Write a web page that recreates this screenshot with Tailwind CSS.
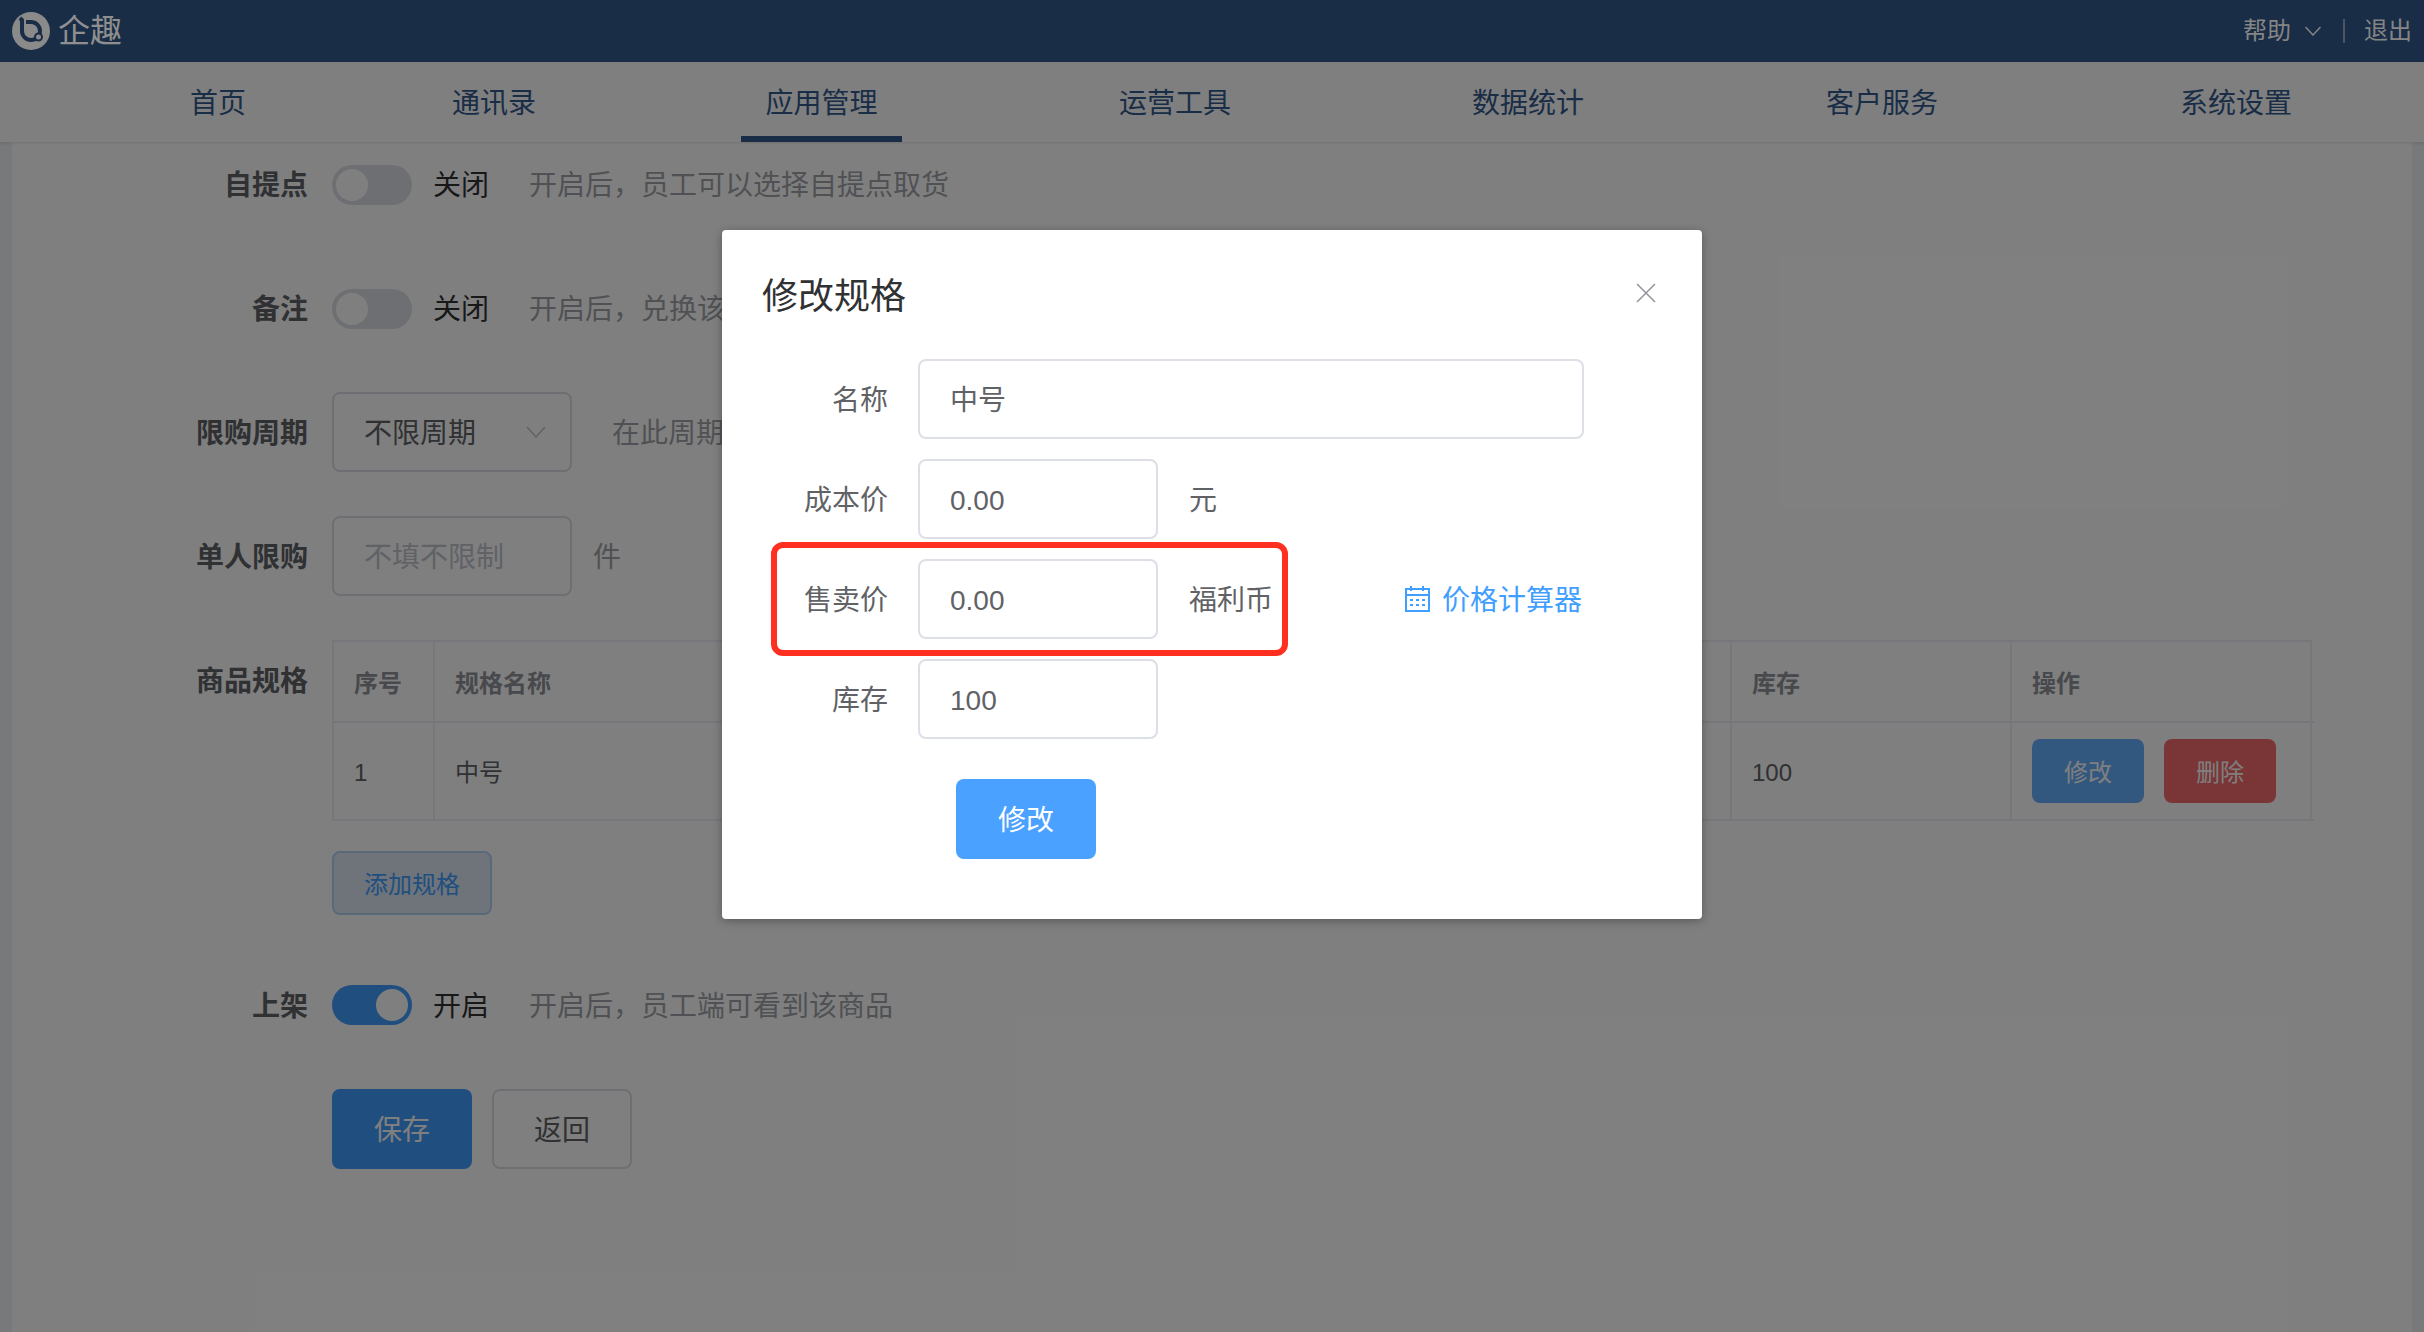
<!DOCTYPE html>
<html lang="zh-CN">
<head>
    <meta charset="UTF-8">
    <title>修改规格</title>
    <script src="https://cdn.jsdelivr.net/npm/@tailwindcss/browser@4"></script>
</head>
<body class="relative w-[2424px] h-[1332px] overflow-hidden bg-[#f0f2f5] font-['Liberation_Sans','Noto_Sans_CJK_SC',sans-serif] text-[28px] leading-10">
    <!-- header stays above the mask, its colours are the dimmed ones -->
    <header class="relative z-20 flex items-center h-[62px] pl-3 pr-3 bg-[#1a2d47]">
        <svg class="w-[38px] h-[38px]" viewBox="0 0 38 38">
            <circle cx="19" cy="19" r="19" fill="#8a8a8a"/>
            <path d="M8 6l2 2v11a9 9 0 1 0 9-9h-5" fill="none" stroke="#1a2d47" stroke-width="4"/>
            <circle cx="26.500" cy="25" r="3.500" fill="#8a8a8a" stroke="#1a2d47" stroke-width="2"/>
        </svg>
        <span class="ml-2 text-[32px] text-[#8f8f8f]">企趣</span>
        <span class="ml-auto text-2xl text-[#858585]">帮助</span>
        <svg class="ml-[14px] w-4 h-[10px]" viewBox="0 0 16 10"><path d="M0.500 1l7.500 8 7.500-8" fill="none" stroke="#858585" stroke-width="1.500"/></svg>
        <span class="ml-[22px] w-0.5 h-6 bg-[#4a5668]"></span>
        <span class="ml-[19px] text-2xl text-[#858585]">退出</span>
    </header>

    <nav class="relative z-10 flex h-20 pl-[166px] bg-white shadow-[0_1px_3px_rgba(0,0,0,0.12)] text-[#345a8e]">
        <a class="px-6 pt-[22px]">首页</a>
        <a class="ml-[158px] px-6 pt-[22px]">通讯录</a>
        <a class="ml-[181px] w-[161px] text-center pt-[22px] border-b-[6px] border-[#345a8e]">应用管理</a>
        <a class="ml-[193px] px-6 pt-[22px]">运营工具</a>
        <a class="ml-[193px] px-6 pt-[22px]">数据统计</a>
        <a class="ml-[194px] px-6 pt-[22px]">客户服务</a>
        <a class="ml-[194px] px-6 pt-[22px]">系统设置</a>
    </nav>

    <main class="mx-3 h-[1190px] pt-0.5 bg-white text-[#303133]">
        <div class="flex items-center h-20 mb-11">
            <label class="w-[296px] pt-1 text-right font-bold text-[#606266]">自提点</label>
            <span class="ml-6 mt-0.5 flex items-center w-20 h-10 pl-1 rounded-full bg-[#dcdfe6]"><i class="w-8 h-8 rounded-full bg-white"></i></span>
            <span class="ml-[21px] pt-1">关闭</span>
            <span class="ml-10 pt-1 text-[#a0a3a8]">开启后，员工可以选择自提点取货</span>
        </div>
        <div class="flex items-center h-20 mb-11">
            <label class="w-[296px] pt-1 text-right font-bold text-[#606266]">备注</label>
            <span class="ml-6 mt-0.5 flex items-center w-20 h-10 pl-1 rounded-full bg-[#dcdfe6]"><i class="w-8 h-8 rounded-full bg-white"></i></span>
            <span class="ml-[21px] pt-1">关闭</span>
            <span class="ml-10 pt-1 text-[#a0a3a8]">开启后，兑换该</span>
        </div>
        <div class="flex items-center h-20 mb-11">
            <label class="w-[296px] pt-1 text-right font-bold text-[#606266]">限购周期</label>
            <div class="ml-6 flex items-center justify-between w-60 h-20 pl-[30px] pr-6 border-2 border-[#dcdfe6] rounded-lg text-[#606266]">
                <span class="pt-1">不限周期</span>
                <svg class="w-5 h-3" viewBox="0 0 20 12"><path d="M1 1l9 10 9-10" fill="none" stroke="#c0c4cc" stroke-width="1.500"/></svg>
            </div>
            <span class="ml-10 pt-1 text-[#a0a3a8]">在此周期</span>
        </div>
        <div class="flex items-center h-20 mb-11">
            <label class="w-[296px] pt-1 text-right font-bold text-[#606266]">单人限购</label>
            <div class="ml-6 flex items-center w-60 h-20 pl-[30px] pt-1 border-2 border-[#dcdfe6] rounded-lg text-[#c0c4cc]">不填不限制</div>
            <span class="ml-[21px] pt-1 text-[#a0a3a8]">件</span>
        </div>

        <div class="flex">
            <label class="w-[296px] pt-[22px] text-right font-bold text-[#606266]">商品规格</label>
            <div class="ml-6 w-[1980px]">
                <div class="grid grid-cols-[101px_432px_432px_433px_280px_302px] border-2 border-b-0 border-[#ebeef5] text-2xl">
                    <div class="flex items-center h-[81px] pl-5 pt-1 border-b-2 border-r-2 border-[#ebeef5] font-bold text-[#909399]">序号</div>
                    <div class="flex items-center h-[81px] pl-5 pt-1 border-b-2 border-r-2 border-[#ebeef5] font-bold text-[#909399]">规格名称</div>
                    <div class="flex items-center h-[81px] pl-5 pt-1 border-b-2 border-r-2 border-[#ebeef5] font-bold text-[#909399]">成本价</div>
                    <div class="flex items-center h-[81px] pl-5 pt-1 border-b-2 border-r-2 border-[#ebeef5] font-bold text-[#909399]">售卖价</div>
                    <div class="flex items-center h-[81px] pl-5 pt-1 border-b-2 border-r-2 border-[#ebeef5] font-bold text-[#909399]">库存</div>
                    <div class="flex items-center h-[81px] pl-5 pt-1 border-b-2 border-[#ebeef5] font-bold text-[#909399]">操作</div>
                    <div class="flex items-center h-[98px] pl-5 pt-1 border-b-2 border-r-2 border-[#ebeef5] text-[#606266]">1</div>
                    <div class="flex items-center h-[98px] pl-5 pt-1 border-b-2 border-r-2 border-[#ebeef5] text-[#606266]">中号</div>
                    <div class="flex items-center h-[98px] pl-5 pt-1 border-b-2 border-r-2 border-[#ebeef5] text-[#606266]">0.00</div>
                    <div class="flex items-center h-[98px] pl-5 pt-1 border-b-2 border-r-2 border-[#ebeef5] text-[#606266]">0.00</div>
                    <div class="flex items-center h-[98px] pl-5 pt-1 border-b-2 border-r-2 border-[#ebeef5] text-[#606266]">100</div>
                    <div class="flex items-center gap-5 h-[98px] pl-5 border-b-2 border-[#ebeef5]">
                        <button class="w-28 h-16 pt-1 rounded-lg bg-[#66b1ff] text-white">修改</button>
                        <button class="w-28 h-16 pt-1 rounded-lg bg-[#f56c6c] text-white">删除</button>
                    </div>
                </div>
                <button class="mt-[30px] w-40 h-16 pt-1 rounded-lg border-2 border-[#b3d3f5] bg-[#dde8f5] text-2xl text-[#409eff]">添加规格</button>
            </div>
        </div>

        <div class="flex items-center h-20 mt-[50px] mb-11">
            <label class="w-[296px] pt-1 text-right font-bold text-[#606266]">上架</label>
            <span class="ml-6 flex items-center justify-end w-20 h-10 pr-1 rounded-full bg-[#409eff]"><i class="w-8 h-8 rounded-full bg-white"></i></span>
            <span class="ml-[21px] pt-1">开启</span>
            <span class="ml-10 pt-1 text-[#a0a3a8]">开启后，员工端可看到该商品</span>
        </div>
        <div class="flex gap-5 ml-80">
            <button class="w-[140px] h-20 pt-1 rounded-lg bg-[#409eff] text-white">保存</button>
            <button class="w-[140px] h-20 pt-1 rounded-lg border-2 border-[#dcdfe6] bg-white text-[#606266]">返回</button>
        </div>
    </main>

    <!-- mask and dialog -->
    <div class="absolute inset-0 z-10 bg-black/50">
        <div class="relative mt-[230px] mx-auto w-[980px] h-[689px] rounded bg-white shadow-[0_2px_10px_rgba(0,0,0,0.3)] text-[#606266]">
            <div class="flex items-center justify-between h-[129px] pl-10 pr-[46px]">
                <h2 class="pt-1 text-4xl leading-[48px] text-[#303133]">修改规格</h2>
                <svg class="w-5 h-5 -mt-1" viewBox="0 0 20 20"><path d="M1 1l18 18M19 1L1 19" stroke="#909399" stroke-width="1.500"/></svg>
            </div>
            <div class="flex items-center h-20 mb-5">
                <label class="w-[166px] pt-1 text-right">名称</label>
                <div class="ml-[30px] flex items-center w-[666px] h-20 pl-[30px] pt-1 border-2 border-[#dcdfe6] rounded-lg">中号</div>
            </div>
            <div class="flex items-center h-20 mb-5">
                <label class="w-[166px] pt-1 text-right">成本价</label>
                <div class="ml-[30px] flex items-center w-60 h-20 pl-[30px] pt-1 border-2 border-[#dcdfe6] rounded-lg">0.00</div>
                <span class="ml-[31px] pt-1">元</span>
            </div>
            <div class="flex items-center h-20 mb-5 pr-[120px]">
                <label class="w-[166px] pt-1 text-right">售卖价</label>
                <div class="ml-[30px] flex items-center w-60 h-20 pl-[30px] pt-1 border-2 border-[#dcdfe6] rounded-lg">0.00</div>
                <span class="ml-[31px] pt-1">福利币</span>
                <a class="ml-auto flex items-center gap-3 text-[#409eff]">
                    <svg class="w-[25px] h-[26px]" viewBox="0 0 25 26" fill="none" stroke="#409eff" stroke-width="2">
                        <path d="M1 3h23v22H1zM1 9h23M6 0v5M18 0v5"/>
                        <path d="M5 14h3M11 14h3M17 14h3M5 19h3M11 19h3M17 19h3"/>
                    </svg>
                    <span class="pt-1">价格计算器</span>
                </a>
            </div>
            <div class="flex items-center h-20">
                <label class="w-[166px] pt-1 text-right">库存</label>
                <div class="ml-[30px] flex items-center w-60 h-20 pl-[30px] pt-1 border-2 border-[#dcdfe6] rounded-lg">100</div>
            </div>
            <button class="block mt-10 ml-[234px] w-[140px] h-20 pt-1 rounded-lg bg-[#4aa1ff] text-white">修改</button>
            <!-- red annotation box drawn on the screenshot -->
            <div class="absolute left-[49px] top-[312px] w-[517px] h-[114px] border-[6px] border-[#ff3020] rounded-xl"></div>
        </div>
    </div>
</body>
</html>
